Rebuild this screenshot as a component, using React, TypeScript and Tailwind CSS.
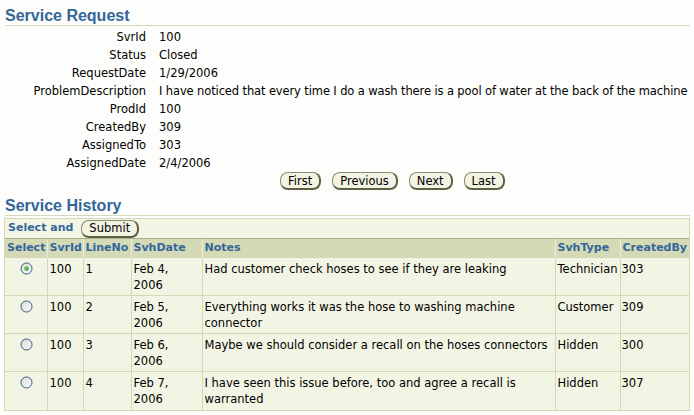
import React from "react";

const Btn = ({ children }: { children: React.ReactNode }) => (
  <button className="h-[18px] px-[7px] rounded-[8px] border border-[#8d8e70] border-r-2 border-b-2 border-r-[#5f6044] border-b-[#5f6044] bg-[#f3f3e3] text-black leading-[14px] text-[11.5px] whitespace-nowrap">
    {children}
  </button>
);

const Radio = ({ checked }: { checked?: boolean }) => (
  <svg width="13" height="13" viewBox="0 0 13 13" className="block">
    <defs>
      <linearGradient id="rg" x1="0" y1="0" x2="1" y2="1">
        <stop offset="0" stopColor="#d8d8d0" />
        <stop offset="1" stopColor="#ffffff" />
      </linearGradient>
      <radialGradient id="dot" cx="0.4" cy="0.4" r="0.6">
        <stop offset="0" stopColor="#7be07b" />
        <stop offset="1" stopColor="#1f9a1f" />
      </radialGradient>
    </defs>
    <circle cx="6.5" cy="6.5" r="5.5" fill="url(#rg)" stroke="#2b5b8c" strokeWidth="1" />
    {checked && <circle cx="6.5" cy="6.5" r="2.2" fill="url(#dot)" />}
  </svg>
);

const fields: [string, string][] = [
  ["SvrId", "100"],
  ["Status", "Closed"],
  ["RequestDate", "1/29/2006"],
  ["ProblemDescription", "I have noticed that every time I do a wash there is a pool of water at the back of the machine"],
  ["ProdId", "100"],
  ["CreatedBy", "309"],
  ["AssignedTo", "303"],
  ["AssignedDate", "2/4/2006"],
];

const rows = [
  { line: "1", date: "Feb 4,", notes: "Had customer check hoses to see if they are leaking", type: "Technician", by: "303", checked: true },
  { line: "2", date: "Feb 5,", notes: "Everything works it was the hose to washing machine connector", type: "Customer", by: "309" },
  { line: "3", date: "Feb 6,", notes: "Maybe we should consider a recall on the hoses connectors", type: "Hidden", by: "300" },
  { line: "4", date: "Feb 7,", notes: "I have seen this issue before, too and agree a recall is warranted", type: "Hidden", by: "307" },
];

const headers = ["Select", "SvrId", "LineNo", "SvhDate", "Notes", "SvhType", "CreatedBy"];
const widths = [42, 36, 48, 71, 353, 65, 69];

export default function App() {
  return (
    <div
      className="w-[694px] h-[415px] overflow-hidden bg-[#fdfefb] text-black text-[11.5px]"
      style={{ fontFamily: '"DejaVu Sans", Verdana, sans-serif' }}
    >
      <h1
        className="ml-[5px] w-[685px] pt-[7px] leading-[18px] text-[16px] font-bold text-[#336699] border-b border-[#d5d8bd]"
        style={{ fontFamily: '"Liberation Sans", Arial, sans-serif' }}
      >
        Service Request
      </h1>
      <div className="mt-[2px] ml-[4px] grid grid-cols-[142px_auto] gap-x-[13px]">
        {fields.map(([k, v]) => (
          <React.Fragment key={k}>
            <div className="text-right leading-[18px] whitespace-nowrap">{k}</div>
            <div className={"leading-[18px] whitespace-nowrap" + (k === "ProblemDescription" ? " tracking-[-0.12px]" : "")}>{v}</div>
          </React.Fragment>
        ))}
      </div>
      <div className="flex gap-[11px] ml-[280px]">
        <Btn>First</Btn>
        <Btn>Previous</Btn>
        <Btn>Next</Btn>
        <Btn>Last</Btn>
      </div>
      <h1
        className="mt-[6px] ml-[5px] w-[685px] leading-[19px] text-[16px] font-bold text-[#336699] border-b border-[#d5d8bd]"
        style={{ fontFamily: '"Liberation Sans", Arial, sans-serif' }}
      >
        Service History
      </h1>
      <div className="mt-[2px] ml-[4px] w-[686px] border border-[#d3d8b5] bg-[#f3f5e4]">
        <div className="h-[19px] flex items-center pl-[3px]">
          <span className="font-bold text-[11px] text-[#336699] mr-[8px]">Select and</span>
          <Btn>Submit</Btn>
        </div>
        <table className="table-fixed border-collapse w-[684px]">
          <colgroup>
            {widths.map((w, i) => (
              <col key={i} style={{ width: w }} />
            ))}
          </colgroup>
          <thead>
            <tr className="bg-[#d4d9b6]">
              {headers.map((h, i) => (
                <th
                  key={h}
                  className={
                    "h-[19px] p-0 pl-[2px] text-left align-middle font-bold text-[11px] leading-[18px] text-[#336699] whitespace-nowrap overflow-hidden border-t border-t-[#a9ac8c] " +
                    (i === 0 ? "border-l-0" : "border-l border-l-[#eceed9]")
                  }
                >
                  {h}
                </th>
              ))}
            </tr>
          </thead>
          <tbody>
            {rows.map((r) => (
              <tr key={r.line} className="align-top">
                <td className="h-[38px] p-0 pt-[3px] border-t border-[#d3d8b5]">
                  <div className="flex justify-center pt-[1px] pl-[1px]">
                    <Radio checked={r.checked} />
                  </div>
                </td>
                <td className="p-0 pt-[3px] pl-[2px] leading-[16px] border-t border-l border-[#d3d8b5]">100</td>
                <td className="p-0 pt-[3px] pl-[2px] leading-[16px] border-t border-l border-[#d3d8b5]">{r.line}</td>
                <td className="p-0 pt-[3px] pl-[2px] leading-[16px] border-t border-l border-[#d3d8b5]">
                  {r.date}
                  <br />
                  2006
                </td>
                <td className="p-0 pt-[3px] pl-[2px] leading-[16px] border-t border-l border-[#d3d8b5]">{r.notes}</td>
                <td className="p-0 pt-[3px] pl-[2px] leading-[16px] border-t border-l border-[#d3d8b5] whitespace-nowrap">{r.type}</td>
                <td className="p-0 pt-[3px] pl-[1px] leading-[16px] border-t border-l border-[#d3d8b5]">{r.by}</td>
              </tr>
            ))}
          </tbody>
        </table>
      </div>
    </div>
  );
}
